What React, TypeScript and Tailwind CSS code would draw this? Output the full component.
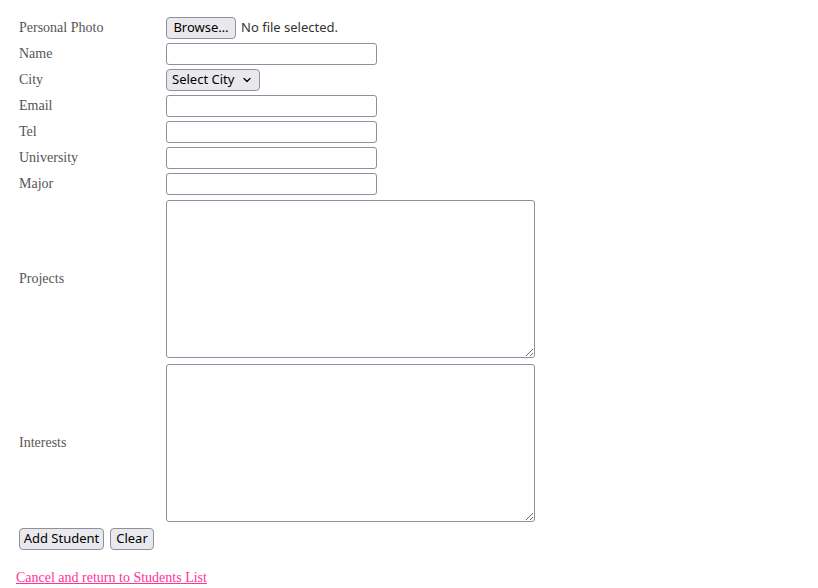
import { ChevronDown } from "lucide-react";

const serif = "font-['Liberation_Serif','Times_New_Roman',serif]";
const ui = "font-['Noto_Sans','Open_Sans',sans-serif]";

const fieldRows = ["Name", "City", "Email", "Tel", "University", "Major"];

function TextInput() {
  return (
    <input
      type="text"
      className="h-[22px] w-[211px] rounded-[3px] border border-[#8f8f9d] bg-white px-1 text-[13px] outline-none"
    />
  );
}

function CitySelect() {
  return (
    <div
      className={`flex h-[22px] w-[94px] items-center justify-between rounded-[4px] border border-[#8f8f9d] bg-[#e9e9ed] pl-[5px] pr-[6px] text-[13px] text-black ${ui}`}
    >
      <span>Select City</span>
      <ChevronDown size={12} strokeWidth={2.5} />
    </div>
  );
}

function GreyButton({ label, width }: { label: string; width: string }) {
  return (
    <button
      type="button"
      className={`flex h-[22px] ${width} items-center justify-center rounded-[4px] border border-[#8f8f9d] bg-[#e9e9ed] text-[13px] text-black ${ui}`}
    >
      {label}
    </button>
  );
}

function Label({ text }: { text: string }) {
  return (
    <div className={`w-[147px] shrink-0 pb-[1px] text-[14px] leading-[18px] text-[#555] ${serif}`}>
      {text}
    </div>
  );
}

export default function App() {
  return (
    <div className="min-h-[588px] w-[818px] bg-white pt-[17px]">
      <form className="pl-[19px]">
        <div className="flex flex-col gap-[4px]">
          <div className="flex h-[22px] items-center">
            <Label text="Personal Photo" />
            <div className={`flex items-center gap-[5px] text-[13px] text-[#333] ${ui}`}>
              <GreyButton label="Browse…" width="w-[70px]" />
              <span>No file selected.</span>
            </div>
          </div>
          {fieldRows.map((name) => (
            <div key={name} className="flex h-[22px] items-center">
              <Label text={name} />
              {name === "City" ? <CitySelect /> : <TextInput />}
            </div>
          ))}
        </div>

        <div className="mt-[5px] flex flex-col gap-[6px]">
          {["Projects", "Interests"].map((name) => (
            <div key={name} className="flex items-center">
              <Label text={name} />
              <textarea className="block h-[158px] w-[369px] rounded-[3px] border border-[#8f8f9d] bg-white outline-none" />
            </div>
          ))}
        </div>

        <div className="mt-[6px] flex gap-[6px]">
          <GreyButton label="Add Student" width="w-[85px]" />
          <GreyButton label="Clear" width="w-[44px]" />
        </div>
      </form>

      <div className="mt-[16px] pl-4 leading-[20px]">
        <a href="#" className={`text-[14px] text-[#ff3399] underline ${serif}`}>
          Cancel and return to Students List
        </a>
      </div>
    </div>
  );
}
